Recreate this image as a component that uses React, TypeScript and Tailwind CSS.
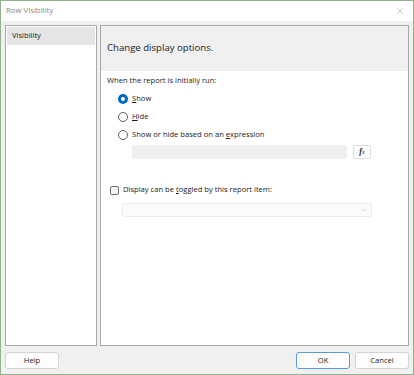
import { ChevronDown, X } from 'lucide-react';

const font = { fontFamily: '"Open Sans", "Noto Sans", sans-serif' };

function Radio({ checked, children }: { checked?: boolean; children: React.ReactNode }) {
    return (
        <div className="flex items-center h-[18px] gap-[4px] pl-[11px]">
            {checked ? (
                <span className="w-[10px] h-[10px] rounded-full bg-[#0067c0] flex items-center justify-center">
                    <span className="w-[4px] h-[4px] rounded-full bg-white"></span>
                </span>
            ) : (
                <span className="w-[10px] h-[10px] rounded-full border border-[#5f5f5f] bg-white"></span>
            )}
            <span className="text-[7.6px] text-[#1b1b1b] leading-none">{children}</span>
        </div>
    );
}

function Button({ children, primary }: { children: React.ReactNode; primary?: boolean }) {
    return (
        <button
            className={
                'w-[54px] h-[17px] rounded-[3px] bg-[#fdfdfd] text-[7.6px] text-[#1b1b1b] leading-none flex items-center justify-center ' +
                (primary ? 'border border-[#5a9ad8]' : 'border border-[#d3d3d3]')
            }
        >
            {children}
        </button>
    );
}

export default function App() {
    return (
        <div style={font} className="w-[414px] h-[375px] bg-[#f0f0f0] border border-[#92b18c] flex flex-col overflow-hidden">
            {/* title bar */}
            <div className="h-[20px] bg-white flex items-center justify-between pl-[5px] pr-[8px] shrink-0">
                <span className="text-[7.8px] text-[#8a8a8a]">Row Visibility</span>
                <X size={10} color="#8a8a8a" strokeWidth={1.2} />
            </div>

            <div className="flex-1 flex flex-col px-[4px] pt-[4px] pb-[6px]">
                <div className="flex gap-[3px] h-[321px]">
                    {/* left nav */}
                    <div className="w-[92px] bg-white border border-[#a9a9a9] p-[1px]">
                        <div className="h-[18px] bg-[#e5e5e5] flex items-center pl-[5px] text-[7.6px] text-[#1b1b1b]">
                            Visibility
                        </div>
                    </div>

                    {/* right panel */}
                    <div className="flex-1 bg-white border border-[#a9a9a9] flex flex-col">
                        <div className="h-[45px] bg-[#efefef] flex items-center pl-[6px] text-[9.6px] text-[#1b1b1b]">
                            Change display options.
                        </div>
                        <div className="flex flex-col pl-[6px] pt-[2px]">
                            <div className="text-[7.6px] text-[#1b1b1b] h-[15px] flex items-center">
                                When the report is initially run:
                            </div>
                            <div className="h-[2px]"></div>
                            <Radio checked>
                                <span className="underline">S</span>how
                            </Radio>
                            <Radio>
                                <span className="underline">H</span>ide
                            </Radio>
                            <Radio>
                                Show or hide based on an <span className="underline">e</span>xpression
                            </Radio>
                            <div className="flex items-center gap-[6px] pl-[25px] pt-[1px]">
                                <div className="w-[215px] h-[14px] bg-[#f0f0f0] rounded-[2px]"></div>
                                <div className="w-[18px] h-[14px] rounded-[2px] border border-[#dedede] bg-[#fdfdfd] flex items-center justify-center text-[8px] italic text-[#222]" style={{ fontFamily: '"Liberation Serif", serif' }}>
                                    <span className="font-bold">f</span><span className="text-[6px]">x</span>
                                </div>
                            </div>

                            <div className="flex items-center gap-[4px] pl-[3px] mt-[26px] h-[10px]">
                                <span className="w-[9px] h-[9px] rounded-[2px] border border-[#6f6f6f] bg-[#f7f7f7]"></span>
                                <span className="text-[7.6px] text-[#1b1b1b] leading-none">
                                    Display can be <span className="underline">t</span>oggled by this report item:
                                </span>
                            </div>
                            <div className="ml-[15px] mt-[8px] w-[250px] h-[14px] bg-[#fbfbfb] border border-[#ececec] rounded-[2px] flex items-center justify-end pr-[3px]">
                                <ChevronDown size={8} color="#b5b5b5" strokeWidth={1.5} />
                            </div>
                        </div>
                    </div>
                </div>

                {/* footer */}
                <div className="flex items-center justify-between mt-[6px]">
                    <Button>Help</Button>
                    <div className="flex gap-[5px]">
                        <Button primary>OK</Button>
                        <Button>Cancel</Button>
                    </div>
                </div>
            </div>
        </div>
    );
}
